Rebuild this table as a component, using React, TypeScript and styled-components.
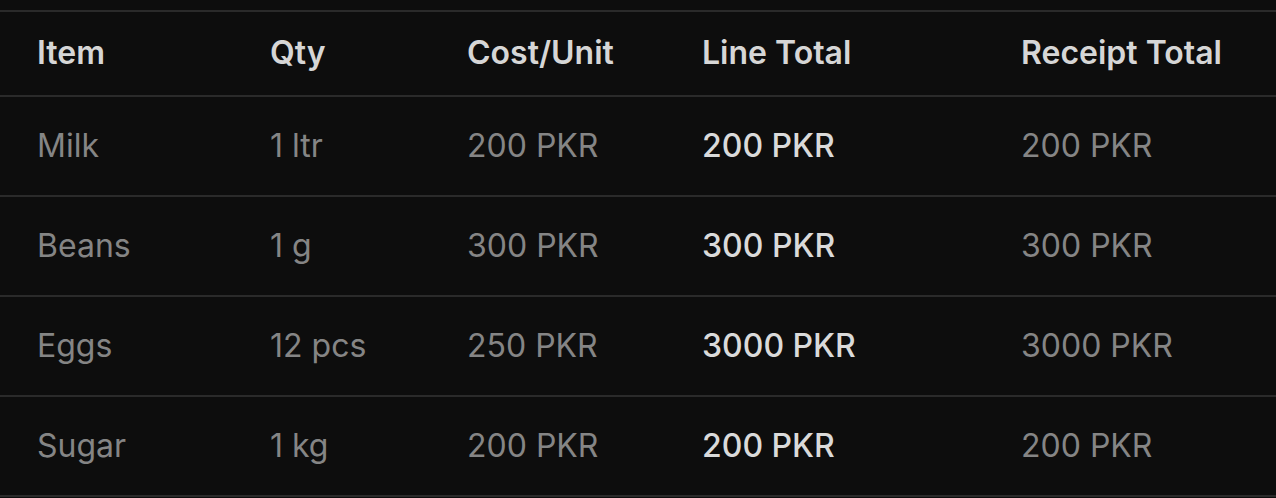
import React from 'react';
import styled, { createGlobalStyle } from 'styled-components';

const GlobalStyle = createGlobalStyle`
  html, body {
    margin: 0;
    padding: 0;
    background: #0d0d0d;
  }
  body {
    font-family: Inter, "Noto Sans", sans-serif;
    -webkit-font-smoothing: antialiased;
  }
`;

const Page = styled.div`
  background: #0d0d0d;
  min-height: 498px;
  padding-top: 10px;
`;

const Table = styled.div`
  border-top: 2px solid #2a2a2a;
`;

const Row = styled.div<{ $head?: boolean }>`
  display: grid;
  grid-template-columns: 233px 197px 235px 319px 1fr;
  align-items: center;
  box-sizing: border-box;
  height: ${(p) => (p.$head ? '85px' : '100px')};
  padding: 0 0 2px 37px;
  border-bottom: 2px solid #2a2a2a;
`;

const HeadCell = styled.div`
  font-size: 32px;
  font-weight: 600;
  color: #d6d6d6;
  white-space: nowrap;
`;

const Cell = styled.div<{ $strong?: boolean }>`
  font-size: 32px;
  font-weight: ${(p) => (p.$strong ? 500 : 400)};
  color: ${(p) => (p.$strong ? '#dadada' : '#858585')};
  white-space: nowrap;
`;

const items = [
  { name: 'Milk', qty: '1 ltr', cost: '200 PKR', line: '200 PKR', total: '200 PKR' },
  { name: 'Beans', qty: '1 g', cost: '300 PKR', line: '300 PKR', total: '300 PKR' },
  { name: 'Eggs', qty: '12 pcs', cost: '250 PKR', line: '3000 PKR', total: '3000 PKR' },
  { name: 'Sugar', qty: '1 kg', cost: '200 PKR', line: '200 PKR', total: '200 PKR' },
];

const App: React.FC = () => {
  return (
    <>
      <GlobalStyle />
      <Page>
        <Table>
          <Row $head>
            <HeadCell>Item</HeadCell>
            <HeadCell>Qty</HeadCell>
            <HeadCell>Cost/Unit</HeadCell>
            <HeadCell>Line Total</HeadCell>
            <HeadCell>Receipt Total</HeadCell>
          </Row>
          {items.map((it) => (
            <Row key={it.name}>
              <Cell>{it.name}</Cell>
              <Cell>{it.qty}</Cell>
              <Cell>{it.cost}</Cell>
              <Cell $strong>{it.line}</Cell>
              <Cell>{it.total}</Cell>
            </Row>
          ))}
        </Table>
      </Page>
    </>
  );
};

export default App;
